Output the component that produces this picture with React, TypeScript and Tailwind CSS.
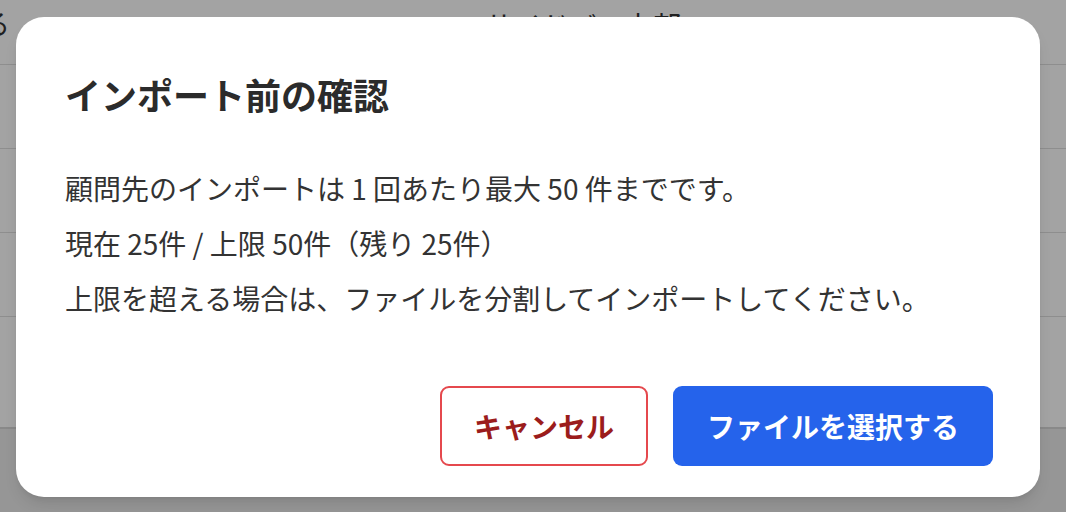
import React from 'react';

const rows = ['', '', ''];

export default function App() {
  return (
    <div className="relative h-[512px] w-[1066px] overflow-hidden bg-white font-['Noto_Sans_CJK_JP','Noto_Sans',sans-serif] text-[#333]">
      {/* page behind the dialog */}
      <div className="flex h-full flex-col">
        <div className="relative flex h-[65px] shrink-0 items-start justify-center border-b border-[#dedede] pt-[8px] text-[28px] leading-[34px]">
          <span className="absolute left-[-18px] top-[6px]">る</span>
          <span className="ml-[100px]">サイドバー上部</span>
        </div>
        {rows.map((_, i) => (
          <div key={i} className="h-[84px] shrink-0 border-b border-[#dedede]" />
        ))}
        <div className="h-[112px] shrink-0 border-b-[2px] border-[#d6d6d6]" />
        <div className="flex-1 bg-[#ebebeb]" />
      </div>

      {/* overlay */}
      <div className="absolute inset-0 flex items-start bg-black/[0.36] pl-[16px] pt-[17px]">
        <div className="flex h-[480px] w-[1024px] flex-col rounded-[28px] bg-white pl-[49px] pr-[47px] pt-[56px] shadow-lg">
          <h2 className="text-[36px] font-bold leading-[43px] text-[#2b2b2b]">インポート前の確認</h2>
          <div className="mt-[45px] text-[28px] leading-[55px] text-[#333]">
            <p>顧問先のインポートは 1 回あたり最大 50 件までです。</p>
            <p>現在 25件 / 上限 50件（残り 25件）</p>
            <p>上限を超える場合は、ファイルを分割してインポートしてください。</p>
          </div>
          <div className="mt-[60px] flex justify-end gap-[25px]">
            <button className="h-[80px] rounded-[9px] border-2 border-[#e5484d] bg-white px-[32px] text-[28px] font-bold text-[#9b1c1c]">
              キャンセル
            </button>
            <button className="h-[80px] rounded-[9px] bg-[#2563eb] px-[34px] text-[28px] font-bold text-white">
              ファイルを選択する
            </button>
          </div>
        </div>
      </div>
    </div>
  );
}
